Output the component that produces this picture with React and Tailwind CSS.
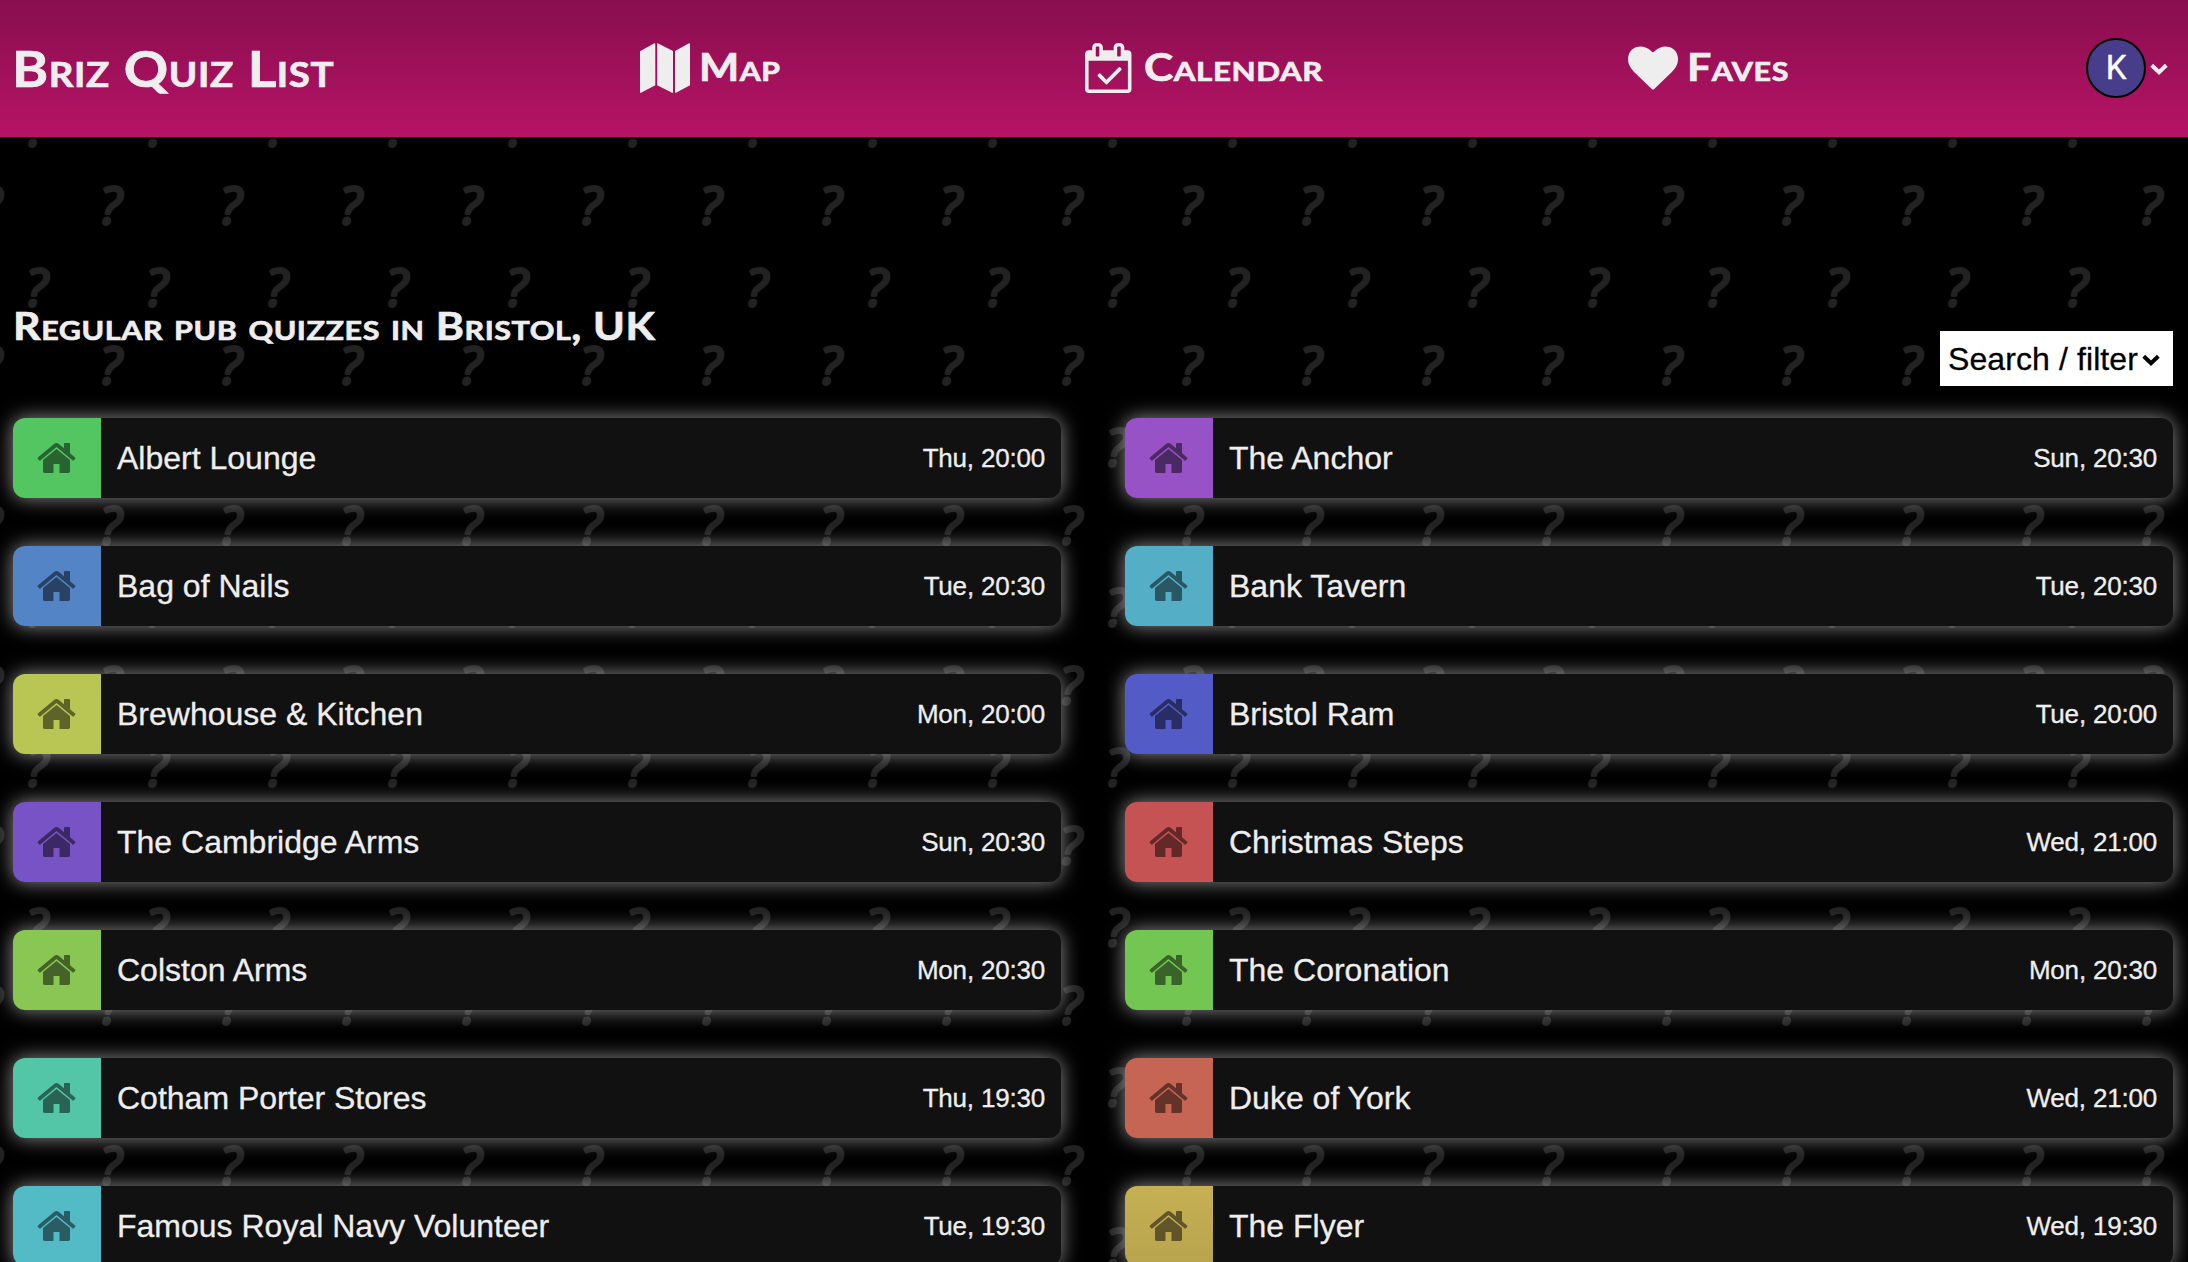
const display = "inline-block origin-left font-['Lato','Liberation_Sans',sans-serif] font-bold [font-variant:small-caps] [-webkit-text-stroke:0.7px_#eee] [paint-order:stroke_fill] leading-none whitespace-nowrap";

const quizzes = [
  ['Albert Lounge', 'Thu, 20:00', 'bg-[#53c662]'],
  ['The Anchor', 'Sun, 20:30', 'bg-[#9753c6]'],
  ['Bag of Nails', 'Tue, 20:30', 'bg-[#5384c6]'],
  ['Bank Tavern', 'Tue, 20:30', 'bg-[#53aec6]'],
  ['Brewhouse & Kitchen', 'Mon, 20:00', 'bg-[#bac653]'],
  ['Bristol Ram', 'Tue, 20:00', 'bg-[#535bc6]'],
  ['The Cambridge Arms', 'Sun, 20:30', 'bg-[#7853c6]'],
  ['Christmas Steps', 'Wed, 21:00', 'bg-[#c65353]'],
  ['Colston Arms', 'Mon, 20:30', 'bg-[#8ac653]'],
  ['The Coronation', 'Mon, 20:30', 'bg-[#74c653]'],
  ['Cotham Porter Stores', 'Thu, 19:30', 'bg-[#53c6a8]'],
  ['Duke of York', 'Wed, 21:00', 'bg-[#c66553]'],
  ['Famous Royal Navy Volunteer', 'Tue, 19:30', 'bg-[#53bbc6]'],
  ['The Flyer', 'Wed, 19:30', 'bg-linear-to-b from-[#c6b053] to-[#b8a44e]'],
];

function HomeIcon() {
  return (
    <svg viewBox="0 0 1664 1792" className="mr-[2px] h-[42px] w-[39px] fill-black/50">
      <path d="M1408 992v480q0 26-19 45t-45 19h-384v-384h-256v384h-384q-26 0-45-19t-19-45v-480q0-1 .5-3t.5-3l575-474 575 474q1 2 1 6zm223-69l-62 74q-8 9-21 11h-3q-13 0-21-7l-692-577-692 577q-12 8-24 7-13-2-21-11l-62-74q-8-10-7-23.5t11-21.5l719-599q32-26 76-26t76 26l244 204v-195q0-14 9-23t23-9h192q14 0 23 9t9 23v408l219 182q10 8 11 21.5t-7 23.5z" />
    </svg>
  );
}

function MapIcon() {
  return (
    <svg viewBox="0 0 50 50" className="size-[50px] fill-[#eee]">
      <path d="M0 8.2 14.3 0.2Q15.3 0 15.3 1V42.2L1 49.8Q0 50 0 49.2ZM17.2 0.8Q17.2 0 18.2 0.4L33 8V49.2Q33 50 32 49.7L17.2 42.3ZM35 8 49 0.2Q50 0 50 1V42.2L36 49.8Q35 50 35 49.2Z" />
    </svg>
  );
}

function CalendarIcon() {
  return (
    <svg viewBox="0 0 1664 1792" className="h-[50px] w-[46.5px] fill-[#eee]">
      <path d="M1303 964l-512 512q-10 9-23 9t-23-9l-288-288q-9-10-9-23t9-22l46-46q9-9 22-9t23 9l220 220 444-444q10-9 23-9t22 9l46 46q9 9 9 22t-9 23zm-1175 700h1408v-1024h-1408v1024zm384-1216v-288q0-14-9-23t-23-9h-64q-14 0-23 9t-9 23v288q0 14 9 23t23 9h64q14 0 23-9t9-23zm768 0v-288q0-14-9-23t-23-9h-64q-14 0-23 9t-9 23v288q0 14 9 23t23 9h64q14 0 23-9t9-23zm384-64v1280q0 52-38 90t-90 38h-1408q-52 0-90-38t-38-90v-1280q0-52 38-90t90-38h128v-96q0-66 47-113t113-47h64q66 0 113 47t47 113v96h384v-96q0-66 47-113t113-47h64q66 0 113 47t47 113v96h128q52 0 90 38t38 90z" />
    </svg>
  );
}

function HeartIcon() {
  return (
    <svg viewBox="0 0 1792 1792" className="size-[50px] fill-[#eee]">
      <path d="M896 1664q-26 0-44-18l-624-602q-10-8-27.5-26t-55.5-65.5-68-97.5-53.5-121-23.5-138q0-220 127-344t351-124q62 0 126.5 21.5t120 58 95.5 68.5 76 68q36-36 76-68t95.5-68.5 120-58 126.5-21.5q224 0 351 124t127 344q0 221-229 450l-623 600q-18 18-44 18z" />
    </svg>
  );
}

function Chevron({ className }) {
  return (
    <svg viewBox="0 0 18 12" className={className} fill="none" stroke="currentColor" strokeWidth="4">
      <path d="M1.7 2.2 9 9.2 16.3 2.2" />
    </svg>
  );
}

function Backdrop() {
  return (
    <svg aria-hidden="true" className="absolute inset-0 -z-10 h-full w-full">
      <defs>
        <pattern id="marks" width="120" height="160" patternUnits="userSpaceOnUse">
          <g className="fill-[#222] stroke-[#222] font-['Open_Sans',sans-serif] text-[52px] italic" strokeWidth="3" strokeLinejoin="round">
            <text x="99.5" y="64">?</text>
            <text x="-20.5" y="64">?</text>
            <text x="25.5" y="146">?</text>
          </g>
        </pattern>
      </defs>
      <rect width="100%" height="100%" fill="url(#marks)" />
    </svg>
  );
}

export default function App() {
  return (
    <div className="relative isolate flex h-[1262px] w-[2188px] flex-col overflow-hidden bg-black font-['Liberation_Sans',Arial,sans-serif] text-[#eee]">
      <Backdrop />
      <header className="flex h-[137px] shrink-0 items-center bg-linear-to-b from-[#880e4f] to-[#b71365] pb-[2px] pl-[12px]">
        <h1 className="w-[628px] leading-none">
          <span className={`${display} scale-x-[1.1] text-[50px] tracking-[0.5px]`}>Briz Quiz List</span>
        </h1>
        <a className="flex w-[445px] items-center gap-[9px]">
          <MapIcon />
          <span className={`${display} mb-[4px] scale-x-[1.12] text-[38px] tracking-[0.5px]`}>Map</span>
        </a>
        <a className="flex w-[543px] items-center gap-[12px]">
          <CalendarIcon />
          <span className={`${display} mb-[4px] scale-x-[1.16] text-[38px] tracking-[0.5px]`}>Calendar</span>
        </a>
        <a className="flex items-center gap-[9px]">
          <HeartIcon />
          <span className={`${display} mb-[4px] scale-x-[1.13] text-[38px] tracking-[0.5px]`}>Faves</span>
        </a>
        <div className="mr-[20px] ml-auto flex items-center gap-[4px]">
          <span className="flex size-[60px] items-center justify-center rounded-full border-2 border-black bg-[#483d8b] font-['Roboto',sans-serif] text-[33px] text-white [-webkit-text-stroke:0.4px_#fff]">K</span>
          <Chevron className="mt-[3px] h-[12px] w-[18px]" />
        </div>
      </header>
      <div className="flex h-[281px] shrink-0 items-end justify-between pr-[15px] pb-[32px] pl-[13px]">
        <h2 className={`${display} mb-[42px] scale-x-[1.13] text-[38px] tracking-[0.5px]`}>Regular pub quizzes in Bristol, UK</h2>
        <button className="flex h-[55px] w-[233px] items-center gap-[4px] bg-white pl-[8px] text-[32px] text-black">
          <span className="tracking-[0.1px] whitespace-nowrap [-webkit-text-stroke:0.3px_#000]">Search / filter</span>
          <Chevron className="mt-[3px] h-[12px] w-[18px] shrink-0" />
        </button>
      </div>
      <main className="grid grid-cols-2 gap-x-16 gap-y-12 pr-[15px] pl-[13px] [-webkit-text-stroke:0.3px_#eee]">
        {quizzes.map(([name, time, color]) => (
          <article key={name} className="flex h-20 items-center overflow-hidden rounded-xl bg-[#111] pr-4 shadow-[0_0_20px_rgba(238,238,238,0.6)]">
            <div className={`flex h-20 w-22 items-center justify-center ${color}`}>
              <HomeIcon />
            </div>
            <h3 className="ml-4 grow text-[32px] leading-none">{name}</h3>
            <time className="text-[26px] leading-none tracking-[-0.2px]">{time}</time>
          </article>
        ))}
      </main>
    </div>
  );
}
